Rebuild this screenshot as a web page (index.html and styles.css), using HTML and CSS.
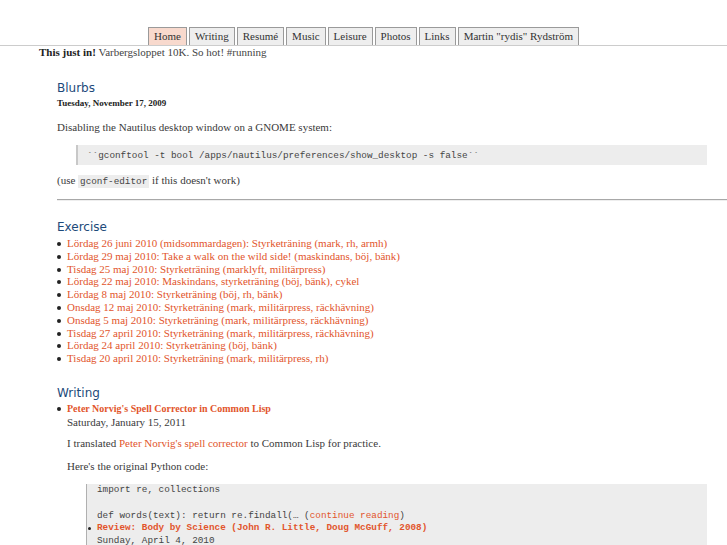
FILE: index.html
```html
<!DOCTYPE html>
<html>
<head>
<meta charset="utf-8">
<title>rydis</title>
<link rel="stylesheet" href="styles.css">
</head>
<body>
<nav class="tabs">
  <a class="tab active" href="#">Home</a>
  <a class="tab" href="#">Writing</a>
  <a class="tab" href="#">Resumé</a>
  <a class="tab" href="#">Music</a>
  <a class="tab" href="#">Leisure</a>
  <a class="tab" href="#">Photos</a>
  <a class="tab" href="#">Links</a>
  <a class="tab" href="#">Martin "rydis" Rydström</a>
</nav>
<div class="news"><b>This just in!</b> Varbergsloppet 10K. So hot! #running</div>
<div class="content">
  <h2 class="heading h-blurbs">Blurbs</h2>
  <div class="date">Tuesday, November 17, 2009</div>
  <p class="para p1">Disabling the Nautilus desktop window on a GNOME system:</p>
  <blockquote class="quote"><code class="mono">``gconftool -t bool /apps/nautilus/preferences/show_desktop -s false``</code></blockquote>
  <p class="para p2">(use <code class="inline">gconf-editor</code> if this doesn't work)</p>
  <hr class="rule">

  <h2 class="heading h-exercise">Exercise</h2>
  <ul class="list">
    <li class="item"><a href="#">Lördag 26 juni 2010 (midsommardagen): Styrketräning (mark, rh, armh)</a></li>
    <li class="item"><a href="#">Lördag 29 maj 2010: Take a walk on the wild side! (maskindans, böj, bänk)</a></li>
    <li class="item"><a href="#">Tisdag 25 maj 2010: Styrketräning (marklyft, militärpress)</a></li>
    <li class="item"><a href="#">Lördag 22 maj 2010: Maskindans, styrketräning (böj, bänk), cykel</a></li>
    <li class="item"><a href="#">Lördag 8 maj 2010: Styrketräning (böj, rh, bänk)</a></li>
    <li class="item"><a href="#">Onsdag 12 maj 2010: Styrketräning (mark, militärpress, räckhävning)</a></li>
    <li class="item"><a href="#">Onsdag 5 maj 2010: Styrketräning (mark, militärpress, räckhävning)</a></li>
    <li class="item"><a href="#">Tisdag 27 april 2010: Styrketräning (mark, militärpress, räckhävning)</a></li>
    <li class="item"><a href="#">Lördag 24 april 2010: Styrketräning (böj, bänk)</a></li>
    <li class="item"><a href="#">Tisdag 20 april 2010: Styrketräning (mark, militärpress, rh)</a></li>
  </ul>

  <h2 class="heading h-writing">Writing</h2>
  <ul class="list">
    <li class="item">
      <a class="title" href="#">Peter Norvig's Spell Corrector in Common Lisp</a>
      <div class="posted">Saturday, January 15, 2011</div>
      <p class="para p3">I translated <a href="#">Peter Norvig's spell corrector</a> to Common Lisp for practice.</p>
      <p class="para p4">Here's the original Python code:</p>
      <div class="code">
<pre class="pre">import re, collections

def words(text): return re.findall(… (<a href="#">continue reading</a>)</pre>
        <ul class="list inner">
          <li class="item"><a class="title-mono" href="#">Review: Body by Science (John R. Little, Doug McGuff, 2008)</a>
            <div class="posted-mono">Sunday, April 4, 2010</div>
          </li>
        </ul>
      </div>
    </li>
  </ul>
</div>
</body>
</html>
```
FILE: styles.css
```css
html, body {
  margin: 0;
  padding: 0;
  background: #fff;
}
body {
  font-family: "Liberation Serif", "Times New Roman", serif;
  font-size: 11px;
  line-height: 13px;
  color: #3a3a3a;
}
a {
  color: #e2552c;
  text-decoration: none;
}
.tabs {
  display: flex;
  justify-content: center;
  gap: 2px;
  padding-top: 27px;
  border-bottom: 1px solid #cccccc;
}
.tab {
  display: block;
  height: 17px;
  line-height: 17px;
  padding: 0 5px;
  border: 1px solid #9a9a9a;
  border-bottom: 0;
  background: #eeeeee;
  color: #333;
}
.tab.active {
  background: #f8d9cd;
}
.news {
  padding-left: 39px;
  color: #444;
}
.news b {
  color: #222;
}
.content {
  margin-left: 57px;
}
.heading {
  font-family: "DejaVu Sans", "Open Sans", sans-serif;
  font-weight: normal;
  font-size: 12px;
  line-height: 15px;
  color: #1d4a7a;
  margin: 0 0 2px;
}
.h-blurbs { margin-top: 22px; }
.h-exercise { margin-top: 19px; }
.h-writing { margin-top: 21px; margin-bottom: 1px; }
.date {
  font-size: 9px;
  line-height: 11px;
  font-weight: bold;
  color: #222;
}
.para {
  margin: 0;
}
.p1 { margin-top: 12px; }
.p2 { margin-top: 9px; }
.p3 { margin-top: 8px; }
.p4 { margin-top: 10px; }
.mono, .inline, .pre, .title-mono, .posted-mono {
  font-family: "Liberation Mono", "Courier New", monospace;
  font-size: 9.33px;
}
.quote {
  margin: 11px 20px 0 19px;
  padding: 3px 9px;
  line-height: 12px;
  background: #ededed;
  border-left: 2px solid #c8c8c8;
  color: #444;
}
.inline {
  background: #ededed;
  padding: 1px 2px;
  color: #444;
}
.rule {
  margin: 11px 0 0;
  border: 0;
  border-top: 1px solid #a8a8a8;
  border-bottom: 1px solid #eeeeee;
  height: 0;
}
.list {
  list-style: none;
  margin: 0;
  padding: 0;
}
.item {
  position: relative;
  padding-left: 10px;
  line-height: 12.8px;
}
.item::before {
  content: "";
  position: absolute;
  left: 0;
  top: 5px;
  width: 4px;
  height: 4px;
  border-radius: 50%;
  background: #222;
}
.title {
  font-weight: bold;
  font-size: 10px;
}
.posted {
  line-height: 13px;
}
.code {
  margin: 12px 20px 0 19px;
  padding: 0 0 20px 10px;
  background: #ededed;
  border-left: 1px solid #b0b0b0;
  color: #444;
}
.pre {
  margin: 0;
  line-height: 12.6px;
}
.inner .item {
  padding-left: 0;
  font-family: "Liberation Mono", "Courier New", monospace;
  font-size: 9.33px;
  line-height: 12.6px;
}
.inner .item::before {
  left: -9px;
  top: 5px;
  width: 3px;
  height: 3px;
}
.title-mono {
  font-weight: bold;
}
```
